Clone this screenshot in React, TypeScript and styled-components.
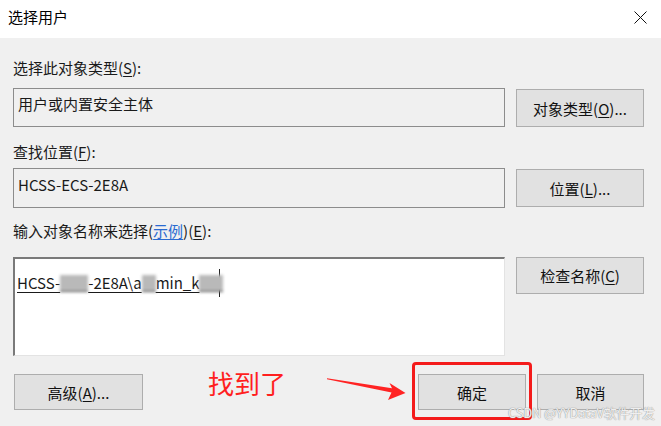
import React from 'react';
import styled, { createGlobalStyle } from 'styled-components';

const Global = createGlobalStyle`
  html, body { margin: 0; padding: 0; background: #f0f0f0; }
  body { font-family: "Noto Sans CJK SC", "Noto Sans", sans-serif; }
`;

const Window = styled.div`
  position: relative;
  width: 661px;
  height: 426px;
  overflow: hidden;
  display: flex;
  flex-direction: column;
  background: #f0f0f0;
  color: #000;
  font-size: 15px;
`;

const TitleBar = styled.div`
  height: 38px;
  flex: none;
  box-sizing: border-box;
  background: #fff;
  display: flex;
  align-items: center;
  justify-content: space-between;
  padding: 0 14px 4px 8px;
`;

const Title = styled.span`
  font-size: 15px;
  line-height: 20px;
`;

const Body = styled.div`
  flex: 1;
  display: flex;
  flex-direction: column;
  padding: 0 17px 0 13px;
`;

const Label = styled.div<{ $mt: number }>`
  margin-top: ${(p) => p.$mt}px;
  height: 20px;
  line-height: 20px;
  font-size: 15px;
  color: #1a1a1a;
`;

const U = styled.span`
  text-decoration: underline;
  text-underline-offset: 2px;
`;

const Link = styled.span`
  color: #2a6ad0;
  text-decoration: underline;
  text-underline-offset: 2px;
`;

const Row = styled.div<{ $mt: number }>`
  margin-top: ${(p) => p.$mt}px;
  display: grid;
  grid-template-columns: 492px 128px;
  column-gap: 11px;
  align-items: start;
`;

const ReadBox = styled.div<{ $h: number; $pt: number }>`
  box-sizing: border-box;
  height: ${(p) => p.$h}px;
  border: 1px solid #8c8c8c;
  background: #f0f0f0;
  padding: ${(p) => p.$pt}px 4px 0 4px;
  line-height: 20px;
  font-size: 15px;
  color: #1a1a1a;
`;

const EditBox = styled.div`
  box-sizing: border-box;
  height: 99px;
  background: #fff;
  border-top: 2px solid #7a7a7a;
  border-left: 2px solid #7a7a7a;
  border-right: 1px solid #e3e3e3;
  border-bottom: 1px solid #e3e3e3;
  padding: 10px 3px 0 2px;
  line-height: 20px;
  font-size: 15px;
  color: #1a1a1a;
`;

const Entry = styled.span`
  position: relative;
  text-decoration: underline;
  text-underline-offset: 3px;
  white-space: nowrap;
`;

const Blur = styled.span<{ $w: number }>`
  display: inline-block;
  width: ${(p) => p.$w}px;
  height: 16px;
  vertical-align: -3px;
  background: #b9b9b9;
  filter: blur(1.5px);
  border-bottom: 1px solid #444;
`;

const Caret = styled.span`
  display: inline-block;
  width: 1px;
  height: 28px;
  background: #222;
  vertical-align: -8px;
  margin-left: -4px;
`;

const Button = styled.div<{ $h: number; $w?: number; $mt?: number }>`
  box-sizing: border-box;
  height: ${(p) => p.$h}px;
  width: ${(p) => (p.$w ? `${p.$w}px` : 'auto')};
  margin-top: ${(p) => p.$mt ?? 0}px;
  background: #e1e1e1;
  border: 1px solid #adadad;
  display: flex;
  align-items: center;
  justify-content: center;
  font-size: 15px;
  color: #111;
`;

const BottomRow = styled.div`
  margin-top: 18px;
  display: flex;
  justify-content: space-between;
  align-items: center;
  padding-left: 1px;
`;

const ButtonGroup = styled.div`
  display: flex;
  gap: 11px;
`;

const Note = styled.div`
  position: absolute;
  left: 208px;
  top: 366px;
  font-size: 26px;
  line-height: 34px;
  color: #ff1f1f;
`;

const Highlight = styled.div`
  position: absolute;
  left: 412px;
  top: 362px;
  width: 120px;
  height: 58px;
  box-sizing: border-box;
  border: 3px solid #f41b1b;
  border-radius: 4px;
`;

const ArrowSvg = styled.svg`
  position: absolute;
  left: 0;
  top: 0;
  pointer-events: none;
`;

const Watermark = styled.div`
  position: absolute;
  left: 508px;
  top: 404px;
  font-size: 13px;
  line-height: 17px;
  letter-spacing: -0.2px;
  color: rgba(255, 255, 255, 0.85);
  text-shadow: 0 0 1px #9a9a9a, 0 0 1px #9a9a9a;
  white-space: nowrap;
`;

const CloseIcon = () => (
  <svg width="13" height="13" viewBox="0 0 13 13">
    <path d="M0.5 0.5 L12.5 12.5 M12.5 0.5 L0.5 12.5" stroke="#111" strokeWidth="1" fill="none" />
  </svg>
);

export default function App() {
  return (
    <>
      <Global />
      <Window>
        <TitleBar>
          <Title>选择用户</Title>
          <CloseIcon />
        </TitleBar>
        <Body>
          <Label $mt={20}>
            选择此对象类型(<U>S</U>):
          </Label>
          <Row $mt={10}>
            <ReadBox $h={39} $pt={5}>用户或内置安全主体</ReadBox>
            <Button $h={38} $mt={1}>
              对象类型(<U>O</U>)...
            </Button>
          </Row>

          <Label $mt={15}>
            查找位置(<U>F</U>):
          </Label>
          <Row $mt={6}>
            <ReadBox $h={40} $pt={6}>HCSS-ECS-2E8A</ReadBox>
            <Button $h={38} $mt={1}>
              位置(<U>L</U>)...
            </Button>
          </Row>

          <Label $mt={13}>
            输入对象名称来选择(<Link>示例</Link>)(<U>E</U>):
          </Label>
          <Row $mt={16}>
            <EditBox>
              <Entry>
                HCSS-<Blur $w={28} />-2E8A\a<Blur $w={14} />min_k<Blur $w={24} />
              </Entry>
              <Caret />
            </EditBox>
            <Button $h={37}>
              检查名称(<U>C</U>)
            </Button>
          </Row>

          <BottomRow>
            <Button $h={36} $w={129}>
              高级(<U>A</U>)...
            </Button>
            <ButtonGroup>
              <Button $h={36} $w={108}>确定</Button>
              <Button $h={36} $w={107}>取消</Button>
            </ButtonGroup>
          </BottomRow>
        </Body>

        <Note>找到了</Note>
        <ArrowSvg width="661" height="426" viewBox="0 0 661 426">
          <polygon
            points="327,378.3 392,388.2 389.5,383 405.5,393 388,400 391.5,392.4 327,379.3"
            fill="#ff2323"
          />
        </ArrowSvg>
        <Highlight />
        <Watermark>CSDN @YYDataV软件开发</Watermark>
      </Window>
    </>
  );
}
